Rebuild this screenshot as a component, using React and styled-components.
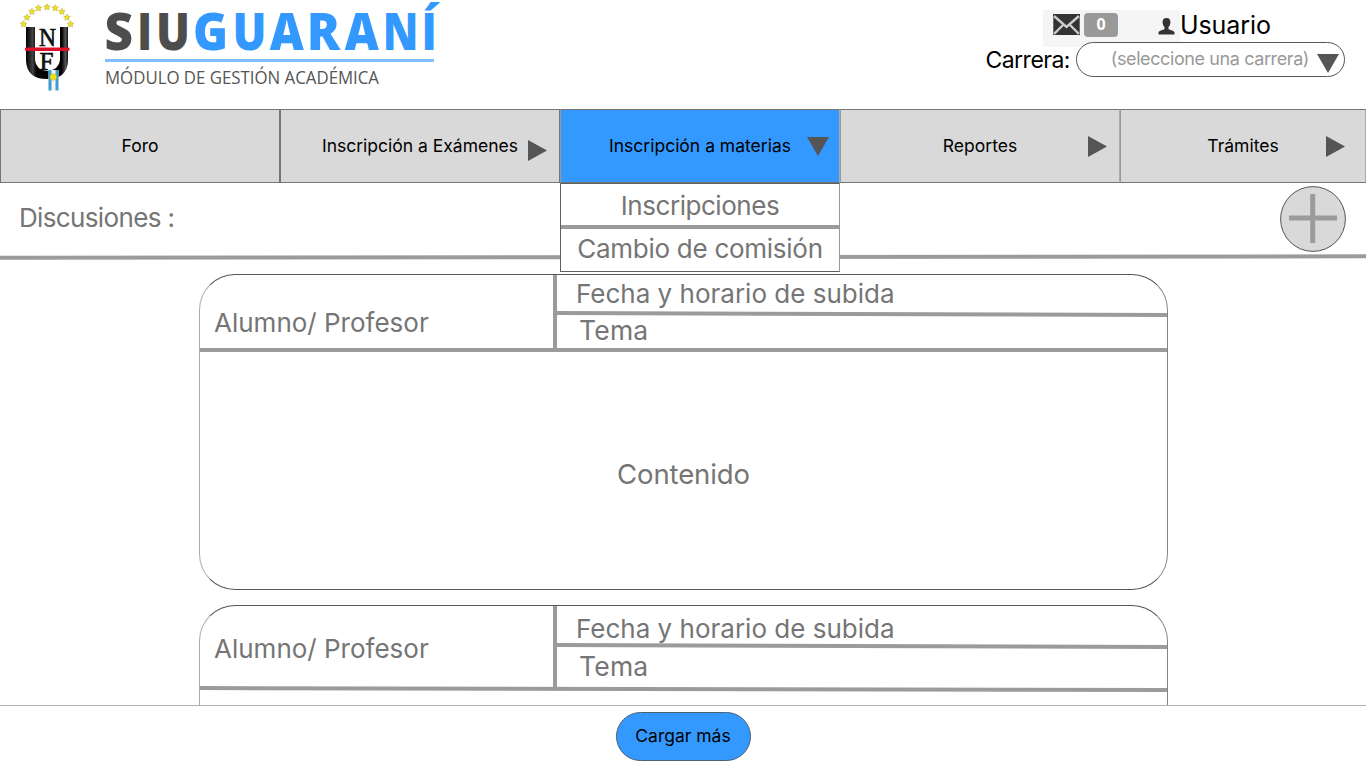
import React from "react";
import styled, { createGlobalStyle } from "styled-components";

const GlobalStyle = createGlobalStyle`
  * { box-sizing: border-box; }
  body { margin: 0; background: #fff; overflow: hidden; font-family: Inter, "Liberation Sans", sans-serif; }
`;

const Page = styled.div`
  width: 1366px;
  height: 768px;
  display: flex;
  flex-direction: column;
  overflow: hidden;
`;

const Text = styled.span`
  font-size: ${(p) => p.$size || 26}px;
  letter-spacing: ${(p) => p.$track ?? 0}px;
  color: ${(p) => p.$color || "#757575"};
  line-height: 1;
  white-space: nowrap;
`;

const Header = styled.header`
  height: 109px;
  flex: none;
  display: flex;
  justify-content: space-between;
`;

const Brand = styled.svg`
  display: block;
  flex: none;
`;

const Account = styled.div`
  width: 390px;
  padding: 10px 21px 0 0;
  display: flex;
  flex-direction: column;
`;

const UserRow = styled.div`
  display: flex;
  align-items: flex-start;
  height: 32px;
  padding-left: 67px;
`;

const Status = styled.div`
  width: 137px;
  height: 37px;
  padding: 3px 5px 0 10px;
  background: #f5f5f5;
  display: flex;
  align-items: flex-start;
`;

const Badge = styled.div`
  width: 34px;
  height: 24px;
  margin: 0 40px 0 4px;
  border-radius: 4px;
  background: #999;
  color: #fff;
  font: bold 16px/23px "Noto Sans", sans-serif;
  text-align: center;
`;

const UserName = styled.div`
  padding: 3px 0 0 0;
  display: flex;
`;

const CareerRow = styled.div`
  display: flex;
  align-items: center;
  justify-content: flex-end;
  gap: 6px;
  > span { margin-top: 2px; }
`;

const Select = styled.div`
  width: 269px;
  flex: none;
  height: 35px;
  border: 1px solid #555;
  border-radius: 18px;
  background: #fff;
  display: flex;
  align-items: center;
  justify-content: flex-end;
  gap: 8px;
  padding-right: 5px;
  svg { margin-top: 7px; }
  span { margin-top: -1px; }
`;

const Nav = styled.nav`
  height: 74px;
  flex: none;
  display: grid;
  grid-template-columns: 280px 280px 280px 280px 246px;
`;

const NavItem = styled.div`
  display: grid;
  position: relative;
  align-items: center;
  justify-items: center;
  border: 1px solid #757575;
  border-left-color: ${(p) => (p.$soft ? "#999" : "#757575")};
  border-right-color: ${(p) => (p.$soft ? "#aaa" : "#757575")};
  background: ${(p) => (p.$active ? "#3399ff" : "#d9d9d9")};
  > span, > svg { grid-area: 1 / 1; }
  > svg {
    justify-self: end;
    margin-right: ${(p) => p.$end || 0}px;
    margin-top: ${(p) => p.$drop || 0}px;
  }
`;

const Menu = styled.div`
  position: absolute;
  z-index: 2;
  top: 73px;
  left: -1px;
  width: 280px;
  height: 89px;
  border: 1px solid #606060;
  border-right-color: #999;
  background: #fff;
  display: flex;
  flex-direction: column;
`;

const MenuEntry = styled.div`
  height: ${(p) => p.$height}px;
  flex: none;
  display: flex;
  align-items: center;
  justify-content: center;
  padding-top: ${(p) => p.$drop || 0}px;
`;

const Rule = styled.div`
  height: 4px;
  flex: none;
  background: #9b9b9b;
  transform: skewY(${(p) => p.$skew || 0}deg);
`;

const TitleBar = styled.div`
  height: 72px;
  flex: none;
  display: flex;
  align-items: center;
  justify-content: space-between;
  padding: 0 20px 0 19px;
  > span { margin-top: -2px; }
`;

const Feed = styled.main`
  height: 446px;
  flex: none;
  padding: 15px 0 0 1px;
  overflow: hidden;
  display: flex;
  flex-direction: column;
  align-items: center;
  gap: 15px;
`;

const Card = styled.article`
  width: 969px;
  height: 316px;
  flex: none;
  border: 1px solid #555;
  border-left-color: #aaa;
  border-right-color: #858585;
  border-radius: 36px;
  display: flex;
  flex-direction: column;
`;

const CardHead = styled.div`
  height: ${(p) => p.$height}px;
  flex: none;
  display: flex;
`;

const Author = styled.div`
  width: 357px;
  border-right: 4px solid #9b9b9b;
  padding: ${(p) => p.$top}px 0 0 14px;
  display: flex;
`;

const Details = styled.div`
  flex: 1;
  display: flex;
  flex-direction: column;
`;

const Detail = styled.div`
  height: ${(p) => p.$height}px;
  flex: none;
  padding: ${(p) => p.$top}px 0 0 ${(p) => p.$left}px;
  display: flex;
`;

const Content = styled.div`
  flex: 1;
  display: flex;
  align-items: center;
  justify-content: center;
  padding-top: 8px;
`;

const Footer = styled.footer`
  height: 63px;
  flex: none;
  border-top: 1px solid #b0b0b0;
  background: #fff;
  display: flex;
  justify-content: center;
  padding-top: 6px;
`;

const MoreButton = styled.button`
  width: 135px;
  height: 49px;
  padding: 0 0 2px;
  font-family: inherit;
  border: 1px solid #4b5f75;
  border-radius: 25px;
  background: #3399ff;
`;

const ArrowRight = () => (
  <svg width="19" height="21" viewBox="0 0 19 21"><path d="M0 0L19 10.5L0 21Z" fill="#555" /></svg>
);

const ArrowDown = () => (
  <svg width="22" height="19" viewBox="0 0 22 19"><path d="M0 0H22L11 19Z" fill="#555" /></svg>
);

const Mail = () => (
  <svg width="27" height="23" viewBox="0 0 27 23">
    <rect y="1" width="27" height="21" fill="#333" />
    <path d="M1 3L13.500 14L26 3M1 21L10 12M26 21L17 12" fill="none" stroke="#ccc" strokeWidth="2.400" />
    <path d="M0 4V20M27 4V20" stroke="#aaa" strokeWidth="1" />
  </svg>
);

const PersonIcon = styled.svg`
  margin-top: 5px;
`;

const Person = () => (
  <PersonIcon width="17" height="17" viewBox="0 0 17 17">
    <path d="M8.500 0C11.500 0 12.600 2 12.400 4.500C12.300 6.500 11.500 8 10.500 9V11C12 12.200 16 12.500 16.500 14.500V16.500H.5V14.500C1 12.500 5 12.200 6.500 11V9C5.500 8 4.700 6.500 4.600 4.500C4.400 2 5.500 0 8.500 0Z" fill="#333" />
  </PersonIcon>
);

const Plus = () => (
  <svg width="66" height="66" viewBox="0 0 66 66">
    <circle cx="33" cy="33" r="32.400" fill="#d9d9d9" stroke="#555" />
    <path d="M9 32H57M32.700 8V57" stroke="#9b9b9b" strokeWidth="5" />
  </svg>
);

const starPoints = [[23.5, 24], [27, 17.3], [32, 11.5], [38.5, 8], [47, 7], [55.3, 8], [62, 11.5], [67, 17.3], [70.5, 24]];
const starPath = "M0-3.300L1.100-1.200L3.300-1L1.700.8L2.100 3L0 2L-2.100 3L-1.700.8L-3.300-1L-1.100-1.200Z";

const gray = "#4d4d4d";
const blue = "#3399ff";

// letter, centre x, horizontal scale, colour
const wordmark = [
  ["S", 118.7, 0.97, gray], ["I", 144.7, 0.86, gray], ["U", 173, 0.88, gray],
  ["G", 210.5, 0.93, blue], ["U", 249.5, 0.88, blue], ["A", 286.8, 0.92, blue], ["R", 323.5, 0.97, blue],
  ["A", 361.7, 0.92, blue], ["N", 400.7, 0.84, blue], ["Í", 429.2, 0.86, blue],
];

const Logo = () => (
  <Brand width="450" height="100" viewBox="0 0 450 100">
    <defs>
      <linearGradient id="steel" x1="26" x2="68" y1="0" y2="0" gradientUnits="userSpaceOnUse">
        <stop offset="0" stopColor="#000" />
        <stop offset=".16" stopColor="#444" />
        <stop offset=".24" stopColor="#050505" />
        <stop offset=".85" stopColor="#000" />
        <stop offset=".94" stopColor="#555" />
        <stop offset="1" stopColor="#111" />
      </linearGradient>
    </defs>
    {starPoints.map(([x, y]) => (
      <path key={x} d={starPath} transform={`translate(${x} ${y})`} fill="#f2df1c" stroke="#b5aa50" strokeWidth=".5" />
    ))}
    <path d="M26 27H35V60Q36 70 47 71Q59 70 60 60V27H68V61Q67 79 47 79Q27 79 26 61Z" fill="url(#steel)" />
    <g fontFamily="Liberation Serif, serif" fontSize="26" textAnchor="middle" fill="#111" stroke="#111" strokeWidth=".7">
      <text x="47.500" y="46" textLength="17" lengthAdjust="spacingAndGlyphs">N</text>
      <text x="46.500" y="69.500" textLength="14" lengthAdjust="spacingAndGlyphs">F</text>
    </g>
    <rect x="25" y="47.500" width="44.500" height="3.500" rx="1" fill="#dc1029" />
    <rect x="48.500" y="70" width="10" height="20.500" fill="#f4f4f4" />
    <path d="M50 70V90.500M57 70V90.500" stroke="#3b9ed0" strokeWidth="3" />
    <circle cx="53.300" cy="77" r="3.300" fill="#f2df1c" stroke="#c5af19" strokeWidth=".5" />
    <g fontFamily="Open Sans, sans-serif" fontWeight="800" fontSize="51" textAnchor="middle">
      {wordmark.map(([letter, center, squeeze, color]) => (
        <text key={center} transform={`translate(${center} 50) scale(${squeeze} 1)`} fill={color}>{letter}</text>
      ))}
    </g>
    <rect x="105" y="59" width="329" height="3" fill="#80bfff" />
    <text x="105" y="83.500" fontFamily="Open Sans, sans-serif" fontSize="17.500" fill="#555" textLength="274" lengthAdjust="spacingAndGlyphs">MÓDULO DE GESTIÓN ACADÉMICA</text>
  </Brand>
);

const NavLabel = ({ children }) => <Text $size={17.5} $color="#000">{children}</Text>;

const Post = ({ head, authorTop, dateHeight, dateTop, themeTop, midSkew, baseSkew, children }) => (
  <Card>
    <CardHead $height={head}>
      <Author $top={authorTop}><Text>Alumno/ Profesor</Text></Author>
      <Details>
        <Detail $height={dateHeight} $top={dateTop} $left={19}><Text>Fecha y horario de subida</Text></Detail>
        <Rule $skew={midSkew} />
        <Detail $top={themeTop} $left={22}><Text $size={26.5} $track={0.2}>Tema</Text></Detail>
      </Details>
    </CardHead>
    <Rule $skew={baseSkew} />
    <Content>{children}</Content>
  </Card>
);

export default function App() {
  return (
    <Page>
      <GlobalStyle />
      <Header>
        <Logo />
        <Account>
          <UserRow>
            <Status><Mail /><Badge>0</Badge><Person /></Status>
            <UserName><Text $size={25} $track={-0.1} $color="#000">Usuario</Text></UserName>
          </UserRow>
          <CareerRow>
            <Text $size={23} $track={-0.5} $color="#000">Carrera:</Text>
            <Select>
              <Text $size={18} $track={-0.4} $color="#999">(seleccione una carrera)</Text>
              <ArrowDown />
            </Select>
          </CareerRow>
        </Account>
      </Header>
      <Nav>
        <NavItem><NavLabel>Foro</NavLabel></NavItem>
        <NavItem $end={12} $drop={8}><NavLabel>Inscripción a Exámenes</NavLabel><ArrowRight /></NavItem>
        <NavItem $active $soft $end={10}>
          <NavLabel>Inscripción a materias</NavLabel>
          <ArrowDown />
          <Menu>
            <MenuEntry $height={41} $drop={2}><Text $track={-0.45}>Inscripciones</Text></MenuEntry>
            <Rule />
            <MenuEntry $height={40}><Text $track={-0.27}>Cambio de comisión</Text></MenuEntry>
          </Menu>
        </NavItem>
        <NavItem $soft $end={12}><NavLabel>Reportes</NavLabel><ArrowRight /></NavItem>
        <NavItem $soft $end={20}><NavLabel>Trámites</NavLabel><ArrowRight /></NavItem>
      </Nav>
      <TitleBar><Text $track={-0.65}>Discusiones :</Text><Plus /></TitleBar>
      <Rule $skew={-0.06} />
      <Feed>
        <Post head={73} authorTop={35} dateHeight={37} dateTop={6} themeTop={1} midSkew={0.17}>
          <Text $size={27.5} $track={-0.1}>Contenido</Text>
        </Post>
        <Post head={81} authorTop={30} dateHeight={38} dateTop={10} themeTop={5} midSkew={0.17} baseSkew={0.11} />
      </Feed>
      <Footer>
        <MoreButton><Text $size={17.5} $color="#000">Cargar más</Text></MoreButton>
      </Footer>
    </Page>
  );
}
